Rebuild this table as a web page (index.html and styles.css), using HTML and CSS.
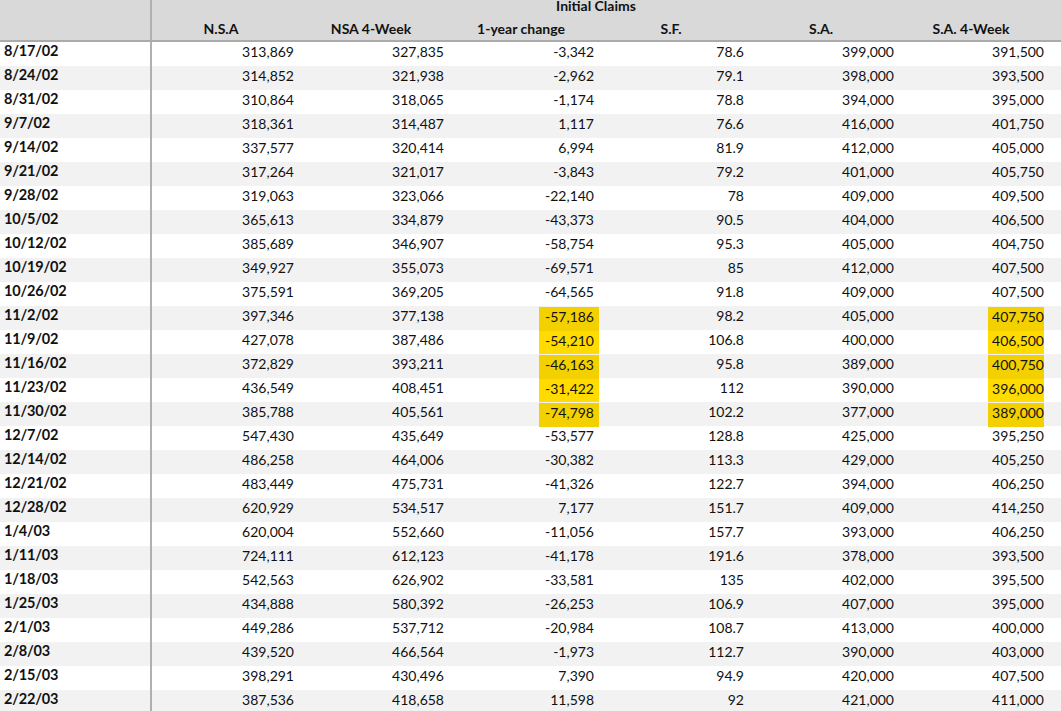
FILE: index.html
```html
<!DOCTYPE html>
<html>
<head>
<meta charset="utf-8">
<link rel="stylesheet" href="styles.css">
</head>
<body>
<div class="sheet">
  <div class="head">
    <div class="head-label"></div>
    <div class="head-main">
      <div class="group">Initial Claims</div>
      <div class="cols">
        <div class="hc">N.S.A</div>
        <div class="hc">NSA 4-Week</div>
        <div class="hc">1-year change</div>
        <div class="hc">S.F.</div>
        <div class="hc">S.A.</div>
        <div class="hc">S.A. 4-Week</div>
      </div>
    </div>
  </div>
  <div class="body">
    <div class="row"><div class="d">8/17/02</div><div class="n">313,869</div><div class="n">327,835</div><div class="n">-3,342</div><div class="n">78.6</div><div class="n">399,000</div><div class="n">391,500</div></div>
    <div class="row"><div class="d">8/24/02</div><div class="n">314,852</div><div class="n">321,938</div><div class="n">-2,962</div><div class="n">79.1</div><div class="n">398,000</div><div class="n">393,500</div></div>
    <div class="row"><div class="d">8/31/02</div><div class="n">310,864</div><div class="n">318,065</div><div class="n">-1,174</div><div class="n">78.8</div><div class="n">394,000</div><div class="n">395,000</div></div>
    <div class="row"><div class="d">9/7/02</div><div class="n">318,361</div><div class="n">314,487</div><div class="n">1,117</div><div class="n">76.6</div><div class="n">416,000</div><div class="n">401,750</div></div>
    <div class="row"><div class="d">9/14/02</div><div class="n">337,577</div><div class="n">320,414</div><div class="n">6,994</div><div class="n">81.9</div><div class="n">412,000</div><div class="n">405,000</div></div>
    <div class="row"><div class="d">9/21/02</div><div class="n">317,264</div><div class="n">321,017</div><div class="n">-3,843</div><div class="n">79.2</div><div class="n">401,000</div><div class="n">405,750</div></div>
    <div class="row"><div class="d">9/28/02</div><div class="n">319,063</div><div class="n">323,066</div><div class="n">-22,140</div><div class="n">78</div><div class="n">409,000</div><div class="n">409,500</div></div>
    <div class="row"><div class="d">10/5/02</div><div class="n">365,613</div><div class="n">334,879</div><div class="n">-43,373</div><div class="n">90.5</div><div class="n">404,000</div><div class="n">406,500</div></div>
    <div class="row"><div class="d">10/12/02</div><div class="n">385,689</div><div class="n">346,907</div><div class="n">-58,754</div><div class="n">95.3</div><div class="n">405,000</div><div class="n">404,750</div></div>
    <div class="row"><div class="d">10/19/02</div><div class="n">349,927</div><div class="n">355,073</div><div class="n">-69,571</div><div class="n">85</div><div class="n">412,000</div><div class="n">407,500</div></div>
    <div class="row"><div class="d">10/26/02</div><div class="n">375,591</div><div class="n">369,205</div><div class="n">-64,565</div><div class="n">91.8</div><div class="n">409,000</div><div class="n">407,500</div></div>
    <div class="row"><div class="d">11/2/02</div><div class="n">397,346</div><div class="n">377,138</div><div class="n"><span class="hl hl-a">-57,186</span></div><div class="n">98.2</div><div class="n">405,000</div><div class="n"><span class="hl hl-b">407,750</span></div></div>
    <div class="row"><div class="d">11/9/02</div><div class="n">427,078</div><div class="n">387,486</div><div class="n"><span class="hl hl-a">-54,210</span></div><div class="n">106.8</div><div class="n">400,000</div><div class="n"><span class="hl hl-b">406,500</span></div></div>
    <div class="row"><div class="d">11/16/02</div><div class="n">372,829</div><div class="n">393,211</div><div class="n"><span class="hl hl-a">-46,163</span></div><div class="n">95.8</div><div class="n">389,000</div><div class="n"><span class="hl hl-b">400,750</span></div></div>
    <div class="row"><div class="d">11/23/02</div><div class="n">436,549</div><div class="n">408,451</div><div class="n"><span class="hl hl-a">-31,422</span></div><div class="n">112</div><div class="n">390,000</div><div class="n"><span class="hl hl-b">396,000</span></div></div>
    <div class="row"><div class="d">11/30/02</div><div class="n">385,788</div><div class="n">405,561</div><div class="n"><span class="hl hl-a">-74,798</span></div><div class="n">102.2</div><div class="n">377,000</div><div class="n"><span class="hl hl-b">389,000</span></div></div>
    <div class="row"><div class="d">12/7/02</div><div class="n">547,430</div><div class="n">435,649</div><div class="n">-53,577</div><div class="n">128.8</div><div class="n">425,000</div><div class="n">395,250</div></div>
    <div class="row"><div class="d">12/14/02</div><div class="n">486,258</div><div class="n">464,006</div><div class="n">-30,382</div><div class="n">113.3</div><div class="n">429,000</div><div class="n">405,250</div></div>
    <div class="row"><div class="d">12/21/02</div><div class="n">483,449</div><div class="n">475,731</div><div class="n">-41,326</div><div class="n">122.7</div><div class="n">394,000</div><div class="n">406,250</div></div>
    <div class="row"><div class="d">12/28/02</div><div class="n">620,929</div><div class="n">534,517</div><div class="n">7,177</div><div class="n">151.7</div><div class="n">409,000</div><div class="n">414,250</div></div>
    <div class="row"><div class="d">1/4/03</div><div class="n">620,004</div><div class="n">552,660</div><div class="n">-11,056</div><div class="n">157.7</div><div class="n">393,000</div><div class="n">406,250</div></div>
    <div class="row"><div class="d">1/11/03</div><div class="n">724,111</div><div class="n">612,123</div><div class="n">-41,178</div><div class="n">191.6</div><div class="n">378,000</div><div class="n">393,500</div></div>
    <div class="row"><div class="d">1/18/03</div><div class="n">542,563</div><div class="n">626,902</div><div class="n">-33,581</div><div class="n">135</div><div class="n">402,000</div><div class="n">395,500</div></div>
    <div class="row"><div class="d">1/25/03</div><div class="n">434,888</div><div class="n">580,392</div><div class="n">-26,253</div><div class="n">106.9</div><div class="n">407,000</div><div class="n">395,000</div></div>
    <div class="row"><div class="d">2/1/03</div><div class="n">449,286</div><div class="n">537,712</div><div class="n">-20,984</div><div class="n">108.7</div><div class="n">413,000</div><div class="n">400,000</div></div>
    <div class="row"><div class="d">2/8/03</div><div class="n">439,520</div><div class="n">466,564</div><div class="n">-1,973</div><div class="n">112.7</div><div class="n">390,000</div><div class="n">403,000</div></div>
    <div class="row"><div class="d">2/15/03</div><div class="n">398,291</div><div class="n">430,496</div><div class="n">7,390</div><div class="n">94.9</div><div class="n">420,000</div><div class="n">407,500</div></div>
    <div class="row"><div class="d">2/22/03</div><div class="n">387,536</div><div class="n">418,658</div><div class="n">11,598</div><div class="n">92</div><div class="n">421,000</div><div class="n">411,000</div></div>
  </div>
</div>
</body>
</html>
```

FILE: styles.css
```css
html, body {
  margin: 0;
  padding: 0;
  background: #ffffff;
}

body {
  font-family: Lato, "Open Sans", "Liberation Sans", sans-serif;
  font-size: 14px;
  color: #111111;
  overflow: hidden;
}

.sheet {
  width: 1061px;
  height: 711px;
  overflow: hidden;
}

.head {
  display: grid;
  grid-template-columns: 152px 1fr;
  height: 40px;
  background: #d9d9d9;
  border-bottom: 2px solid #ababab;
  overflow: hidden;
}

.head-label {
  border-right: 2px solid #b0b0b0;
}

.head-main {
  display: flex;
  flex-direction: column;
}

.group {
  height: 14px;
  margin-top: -3px;
  line-height: 17px;
  font-weight: 700;
  text-align: center;
  width: 900px;
  padding-right: 12px;
  box-sizing: border-box;
}

.cols {
  display: grid;
  grid-template-columns: repeat(6, 150px);
  height: 29px;
  align-items: end;
}

.hc {
  font-weight: 700;
  text-align: center;
  line-height: 17px;
  padding-right: 12px;
  padding-bottom: 3px;
}

.body {
  display: flex;
  flex-direction: column;
}

.row {
  display: grid;
  grid-template-columns: 152px repeat(6, 150px) 1fr;
  height: 24px;
  align-items: stretch;
}

.row:nth-child(even) {
  background: #f2f2f2;
}

.d {
  font-weight: 700;
  font-size: 14.5px;
  padding-left: 4px;
  line-height: 18px;
  letter-spacing: -0.2px;
  border-right: 2px solid #b0b0b0;
}

.n {
  text-align: right;
  padding-right: 8px;
  line-height: 20px;
  font-variant-numeric: tabular-nums;
}

.hl {
  display: inline-block;
  height: 24px;
  line-height: 19px;
  vertical-align: top;
  margin-top: 1px;
  background: #ffdb00;
}

.row:nth-child(even) .hl {
  background: #f3d100;
}

.hl-a {
  padding-left: 6px;
  padding-right: 5px;
  margin-right: -5px;
}

.hl-b {
  padding-left: 4px;
}
```
